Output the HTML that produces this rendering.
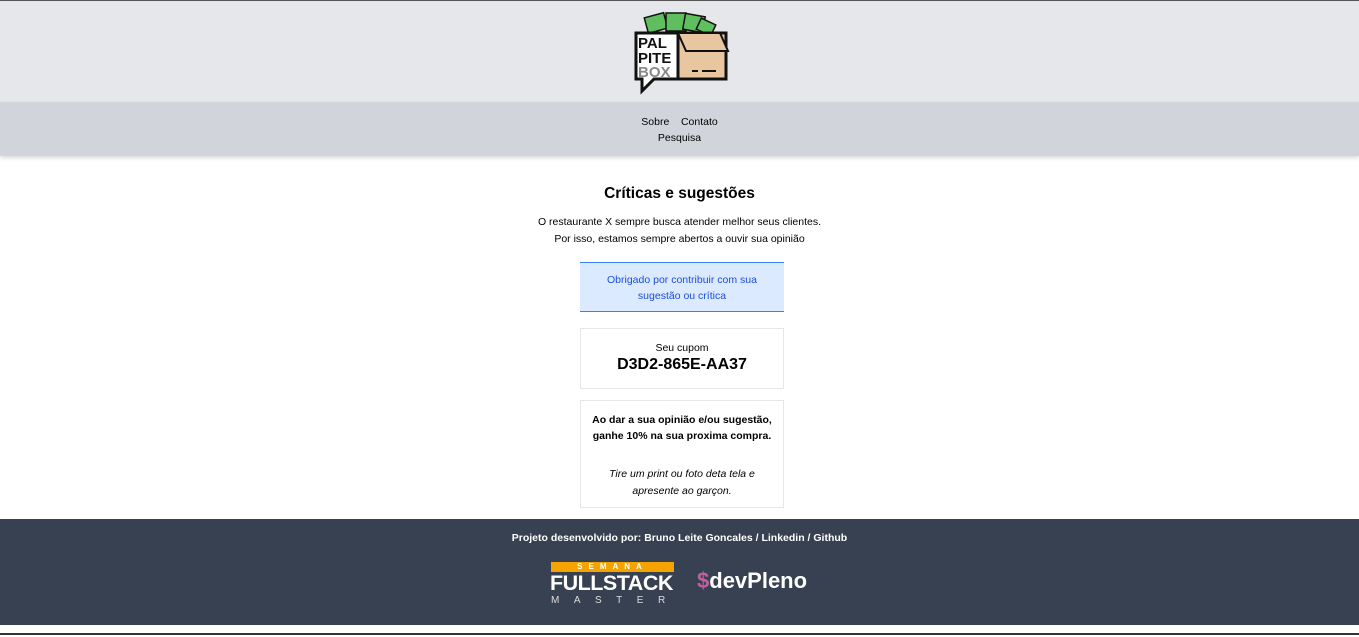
<!DOCTYPE html>
<html><head><meta charset="utf-8"><style>
*{margin:0;padding:0;box-sizing:border-box}
body{width:1359px;height:637px;overflow:hidden;font-family:"Liberation Sans",sans-serif;background:#fff;position:relative;color:#000}
.top{position:absolute;top:0;left:0;width:1359px;height:1px;background:#555}
header{position:absolute;top:1px;left:0;width:1359px;height:101px;background:#e5e7eb}
nav{position:absolute;top:102px;left:0;width:1359px;height:54px;background:#d1d5db;box-shadow:0 2px 4px rgba(0,0,0,.15);text-align:center;font-size:10.5px;line-height:16px;padding-top:12px}
.c{position:absolute;left:0;width:1359px;text-align:center}
h1{font-size:15.5px;font-weight:bold}
.box{position:absolute;left:580px;width:204px;text-align:center;font-size:10.5px}
footer{position:absolute;top:519px;left:0;width:1359px;height:106px;background:#374151;color:#fff}
.bot{position:absolute;top:633px;left:0;width:1359px;height:2px;background:#333}
</style></head><body>
<div class="top"></div>
<header>
<svg style="position:absolute;left:632px;top:10px" width="100" height="84" viewBox="0 0 100 84">
<g stroke="#111" stroke-width="1.5">
<rect x="14" y="4" width="20" height="16" fill="#5fbf5f" transform="rotate(-15 24 12)"/>
<rect x="34" y="2" width="20" height="18" fill="#5fbf5f"/>
<rect x="52" y="4" width="20" height="16" fill="#5fbf5f" transform="rotate(10 62 12)"/>
<rect x="66" y="10" width="16" height="12" fill="#5fbf5f" transform="rotate(25 74 16)"/>
<path d="M4 22 H48 V68 H22 L10 80 V68 H4 Z" fill="#fff" stroke-width="3"/>
<rect x="46" y="22" width="48" height="46" fill="#e8c6a0" stroke-width="3"/>
<path d="M46 22 L88 22 L96 40 L54 40 Z" fill="#e8c6a0" stroke-width="2"/>
</g>
<text x="6" y="37" font-family="Liberation Sans" font-weight="bold" font-size="15" fill="#111">PAL</text>
<text x="6" y="52" font-family="Liberation Sans" font-weight="bold" font-size="15" fill="#111">PITE</text>
<text x="6" y="66" font-family="Liberation Sans" font-weight="bold" font-size="15" fill="#888">BOX</text>
<path d="M60 60h6M70 60h14" stroke="#111" stroke-width="2"/>
</svg>
</header>
<nav>Sobre &nbsp;&nbsp; Contato<br>Pesquisa</nav>
<div class="c" style="top:185px"><h1>Críticas e sugestões</h1></div>
<div class="c" style="top:214px;font-size:10.5px;line-height:17px">O restaurante X sempre busca atender melhor seus clientes.<br>Por isso, estamos sempre abertos a ouvir sua opinião</div>
<div class="box" style="top:262px;height:50px;background:#dbeafe;border-top:1px solid #3b82f6;border-bottom:1px solid #3b82f6;color:#1d4ed8;line-height:16px;padding-top:9px">Obrigado por contribuir com sua<br>sugestão ou crítica</div>
<div class="box" style="top:328px;height:61px;border:1px solid #e5e7eb;padding-top:13px">Seu cupom<div style="font-size:16px;font-weight:bold;margin-top:2px">D3D2-865E-AA37</div></div>
<div class="box" style="top:400px;height:108px;border:1px solid #e5e7eb;padding-top:11px;line-height:16px"><b>Ao dar a sua opinião e/ou sugestão,<br>ganhe 10% na sua proxima compra.</b><div style="font-style:italic;margin-top:22px;line-height:17px">Tire um print ou foto deta tela e<br>apresente ao garçon.</div></div>
<footer>
<div class="c" style="top:13px;font-size:10.5px;font-weight:bold">Projeto desenvolvido por: Bruno Leite Goncales / Linkedin / Github</div>
<div style="position:absolute;left:551px;top:43px;width:123px;height:10px;background:#f5a300;color:#fff;font-size:8px;font-weight:bold;letter-spacing:6px;text-align:center;line-height:10px">SEMANA</div>
<div style="position:absolute;left:550px;top:52px;font-size:21.5px;font-weight:bold;letter-spacing:-0.5px">FULLSTACK</div>
<div style="position:absolute;left:551px;top:76px;font-size:10px;letter-spacing:14.5px;color:#ddd">MASTER</div>
<div style="position:absolute;left:697px;top:49px;font-size:22px;font-weight:bold"><span style="color:#c0609e">$</span>devPleno</div>
</footer>
<div class="bot"></div>
</body></html>
